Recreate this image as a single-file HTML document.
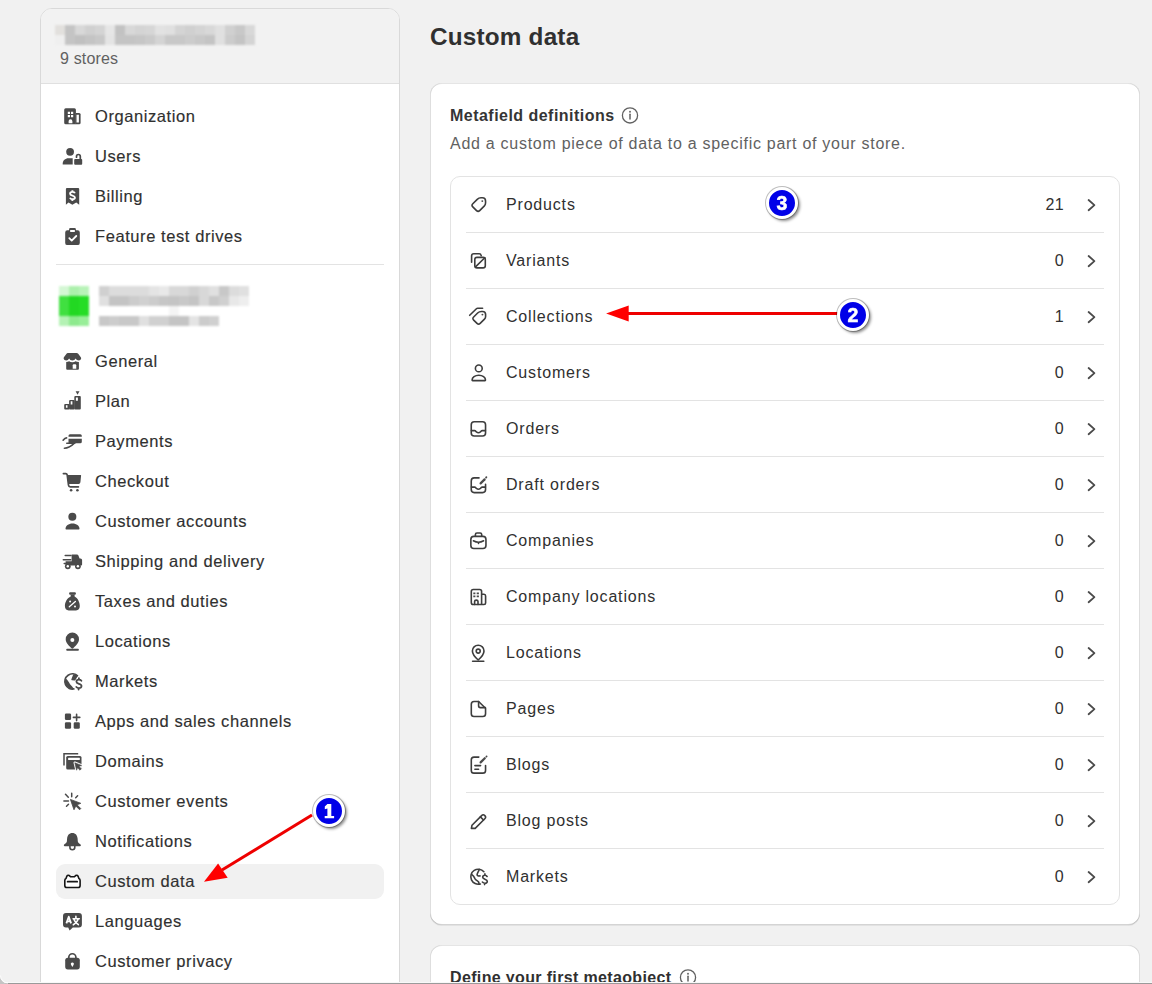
<!DOCTYPE html>
<html><head><meta charset="utf-8">
<style>
*{box-sizing:border-box;margin:0;padding:0}
html,body{width:1152px;height:984px;overflow:hidden;background:#f1f1f1;font-family:"Liberation Sans",sans-serif;color:#303030}
.abs{position:absolute;overflow:visible}
#side{position:absolute;left:40px;top:8px;width:360px;height:1000px;background:#fff;border:1px solid #d9d9d9;border-radius:12px;overflow:hidden}
#shead{position:absolute;left:0;top:0;width:358px;height:75px;background:#f2f2f2;border-bottom:1px solid #e0e0e0}
.txt{position:absolute;white-space:nowrap}
.nav{font-size:16.5px;letter-spacing:0.58px;color:#303030;-webkit-text-stroke:0.15px #303030}
.rowt{font-size:16px;letter-spacing:0.82px;color:#303030}
#card{position:absolute;left:430px;top:83px;width:710px;height:842px;background:#fff;border-radius:12px;
 box-shadow:0 1px 0 0 rgba(26,26,26,.07), inset 0 1px 0 0 rgba(204,204,204,.5), inset 0 -1px 0 0 rgba(0,0,0,.17), inset 1px 0 0 0 rgba(0,0,0,.13), inset -1px 0 0 0 rgba(0,0,0,.13)}
#card2{position:absolute;left:430px;top:945px;width:710px;height:100px;background:#fff;border-radius:12px;
 box-shadow:inset 0 1px 0 0 rgba(204,204,204,.5), inset 1px 0 0 0 rgba(0,0,0,.13), inset -1px 0 0 0 rgba(0,0,0,.13)}
#list{position:absolute;left:450px;top:176px;width:670px;height:729px;border:1px solid #e3e3e3;border-radius:10px;background:#fff}
.hr{position:absolute;height:1px;background:#e3e3e3}
.badge{position:absolute;width:32px;height:32px;border-radius:50%;background:#0000e8;border:3.5px solid #fff;
 box-shadow:0 0 0 1px rgba(0,0,0,.25), 2px 2px 3px rgba(0,0,0,.45);color:#fff;font:bold 19.5px "Liberation Sans",sans-serif;text-align:center;line-height:27px;-webkit-text-stroke:0.5px #fff}
</style></head><body>

<div id="side"><div id="shead"></div></div>
<div class="abs" style="left:0;top:0;width:1px;height:1px;filter:blur(0.8px)">
<div class="abs" style="left:55px;top:25px;width:10px;height:10px;background:#e2e0dd"></div>
<div class="abs" style="left:55px;top:35px;width:10px;height:10px;background:#efefef"></div>
<div class="abs" style="left:65px;top:25px;width:10px;height:10px;background:#c4c4c4"></div>
<div class="abs" style="left:65px;top:35px;width:10px;height:10px;background:#c4c4c4"></div>
<div class="abs" style="left:75px;top:25px;width:10px;height:10px;background:#d8d8d8"></div>
<div class="abs" style="left:75px;top:35px;width:10px;height:10px;background:#c0c0c0"></div>
<div class="abs" style="left:85px;top:25px;width:10px;height:10px;background:#d0d0d0"></div>
<div class="abs" style="left:85px;top:35px;width:10px;height:10px;background:#c4c4c4"></div>
<div class="abs" style="left:95px;top:25px;width:10px;height:10px;background:#d4d4d4"></div>
<div class="abs" style="left:95px;top:35px;width:10px;height:10px;background:#c8c8c8"></div>
<div class="abs" style="left:105px;top:25px;width:10px;height:10px;background:#e6e6e6"></div>
<div class="abs" style="left:105px;top:35px;width:10px;height:10px;background:#e4e4e4"></div>
<div class="abs" style="left:115px;top:25px;width:10px;height:10px;background:#c2c2c2"></div>
<div class="abs" style="left:115px;top:35px;width:10px;height:10px;background:#c4c4c4"></div>
<div class="abs" style="left:125px;top:25px;width:10px;height:10px;background:#d8d8d8"></div>
<div class="abs" style="left:125px;top:35px;width:10px;height:10px;background:#c4c4c4"></div>
<div class="abs" style="left:135px;top:25px;width:10px;height:10px;background:#d4d4d4"></div>
<div class="abs" style="left:135px;top:35px;width:10px;height:10px;background:#c6c6c6"></div>
<div class="abs" style="left:145px;top:25px;width:10px;height:10px;background:#d6d6d6"></div>
<div class="abs" style="left:145px;top:35px;width:10px;height:10px;background:#cacaca"></div>
<div class="abs" style="left:155px;top:25px;width:10px;height:10px;background:#e2e2e2"></div>
<div class="abs" style="left:155px;top:35px;width:10px;height:10px;background:#d4d4d4"></div>
<div class="abs" style="left:165px;top:25px;width:10px;height:10px;background:#e0e0e0"></div>
<div class="abs" style="left:165px;top:35px;width:10px;height:10px;background:#c8c8c8"></div>
<div class="abs" style="left:175px;top:25px;width:10px;height:10px;background:#d4d4d4"></div>
<div class="abs" style="left:175px;top:35px;width:10px;height:10px;background:#c8c8c8"></div>
<div class="abs" style="left:185px;top:25px;width:10px;height:10px;background:#d0d0d0"></div>
<div class="abs" style="left:185px;top:35px;width:10px;height:10px;background:#cccccc"></div>
<div class="abs" style="left:195px;top:25px;width:10px;height:10px;background:#d4d4d4"></div>
<div class="abs" style="left:195px;top:35px;width:10px;height:10px;background:#c8c8c8"></div>
<div class="abs" style="left:205px;top:25px;width:10px;height:10px;background:#d8d8d8"></div>
<div class="abs" style="left:205px;top:35px;width:10px;height:10px;background:#c4c4c4"></div>
<div class="abs" style="left:215px;top:25px;width:10px;height:10px;background:#e0e0e0"></div>
<div class="abs" style="left:215px;top:35px;width:10px;height:10px;background:#e0e0e0"></div>
<div class="abs" style="left:225px;top:25px;width:10px;height:10px;background:#d0d0d0"></div>
<div class="abs" style="left:225px;top:35px;width:10px;height:10px;background:#cccccc"></div>
<div class="abs" style="left:235px;top:25px;width:10px;height:10px;background:#c8c8c8"></div>
<div class="abs" style="left:235px;top:35px;width:10px;height:10px;background:#c4c4c4"></div>
<div class="abs" style="left:245px;top:25px;width:10px;height:10px;background:#d8d8d8"></div>
<div class="abs" style="left:245px;top:35px;width:10px;height:10px;background:#d4d4d4"></div>
</div>
<div class="txt" style="left:60px;top:50px;font-size:16px;letter-spacing:0.15px;color:#616161;line-height:18px">9 stores</div>
<div class="abs" style="left:56px;top:864px;width:328px;height:35px;border-radius:9px;background:#f1f1f1"></div>
<svg class="abs" style="left:62px;top:106px" width="20" height="20" viewBox="0 0 20 20" ><path fill="#4a4a4a" d="M3.7 2.2h8.7a1.5 1.5 0 0 1 1.5 1.5V18.3H3.7a1.5 1.5 0 0 1-1.5-1.5V3.7a1.5 1.5 0 0 1 1.5-1.5Z"/>
<path fill="#4a4a4a" d="M13.8 6.9h3.3a1.5 1.5 0 0 1 1.5 1.5v8.4a1.5 1.5 0 0 1-1.5 1.5h-3.3Z"/>
<path fill="#fff" d="M5.8 5.8h2.2v2.2h-2.2ZM9 5.8h2.2v2.2H9ZM5.8 9h2.2v2.2h-2.2ZM9 9h2.2v2.2H9ZM6.6 17.3V15.2A1.9 1.9 0 0 1 10.4 15.2V17.3ZM14.5 8.7h2.4v7.7h-2.4Z"/></svg>
<div class="txt nav" style="left:95px;top:106px;line-height:20px">Organization</div>
<svg class="abs" style="left:62px;top:146px" width="20" height="20" viewBox="0 0 20 20" ><circle cx="8.1" cy="5.8" r="3.9" fill="#4a4a4a"/>
<path fill="#4a4a4a" d="M0.7 18.6V17.6C0.7 14.6 3.2 12.3 6.4 12.3H10.7V18.6Z"/>
<rect x="12.2" y="13.1" width="8" height="5.6" rx="0.9" fill="#4a4a4a"/>
<path fill="none" stroke="#4a4a4a" stroke-width="1.7" stroke-linecap="round" d="M14.5 11.2V10.4A1.9 1.9 0 0 1 18.3 10.4V13.5"/></svg>
<div class="txt nav" style="left:95px;top:146px;line-height:20px">Users</div>
<svg class="abs" style="left:62px;top:186px" width="20" height="20" viewBox="0 0 20 20" ><path fill="#4a4a4a" d="M5 1.9H16.1A1.1 1.1 0 0 1 17.2 3V18.8L14.25 16.4L10.35 18.8L6.5 16.4L3.9 18.8V3A1.1 1.1 0 0 1 5 1.9Z"/>
<path fill="none" stroke="#fff" stroke-width="1.9" d="M12.9 7.3C12.6 6.4 11.6 5.9 10.4 5.9C9.1 5.9 8.1 6.7 8.1 7.7C8.1 10.1 12.9 9 12.9 11.5C12.9 12.5 11.9 13.3 10.4 13.3C9.2 13.3 8.3 12.7 8 11.8M10.4 4.3V5.9M10.4 13.3V15"/></svg>
<div class="txt nav" style="left:95px;top:186px;line-height:20px">Billing</div>
<svg class="abs" style="left:62px;top:226px" width="20" height="20" viewBox="0 0 20 20" ><path fill="#4a4a4a" d="M7.1 3.2A1.3 1.3 0 0 1 8.4 1.9H12.6A1.3 1.3 0 0 1 13.9 3.2V4.2H15.6A2.2 2.2 0 0 1 17.8 6.4V16.9A2.2 2.2 0 0 1 15.6 19.1H5.4A2.2 2.2 0 0 1 3.2 16.9V6.4A2.2 2.2 0 0 1 5.4 4.2H7.1Z"/>
<rect x="8" y="3.9" width="5" height="2.2" rx="0.8" fill="#fff"/>
<path fill="none" stroke="#fff" stroke-width="1.8" stroke-linecap="round" stroke-linejoin="round" d="M7.3 12.2L9.7 14.6L14.3 10"/></svg>
<div class="txt nav" style="left:95px;top:226px;line-height:20px">Feature test drives</div>
<svg class="abs" style="left:62px;top:351px" width="20" height="20" viewBox="0 0 20 20" ><path fill="#4a4a4a" d="M5.8 1.9H14.6Q15.6 1.9 16.2 2.8L18.8 6.2Q19.3 7 19.1 7.8Q18.6 9.4 16.9 9.4Q14.5 9.4 13.6 7.5Q12.7 9.4 10.35 9.4Q8 9.4 7.1 7.5Q6.2 9.4 4.2 9.4Q2.1 9.4 1.7 7.8Q1.5 7 1.9 6.2L4.5 2.8Q5 1.9 5.8 1.9Z"/>
<path fill="#4a4a4a" d="M4.2 11Q6 11 7.1 10.2Q8.5 11.2 10.35 11.2Q12.2 11.2 13.6 10.2Q14.7 11 16.9 11V17.8Q16.9 18.8 15.9 18.8H5.2Q4.2 18.8 4.2 17.8Z"/>
<path fill="#fff" d="M10.7 14.3Q10.7 13.25 11.75 13.25H13.2Q14.25 13.25 14.25 14.3V17.8H10.7Z"/></svg>
<div class="txt nav" style="left:95px;top:351px;line-height:20px">General</div>
<svg class="abs" style="left:62px;top:391px" width="20" height="20" viewBox="0 0 20 20" ><path fill="#4a4a4a" d="M13.6 0.2H17.5L15.55 3.8Z"/>
<rect x="2.2" y="12.9" width="5.4" height="5.5" rx="1" fill="#4a4a4a"/>
<rect x="7.1" y="9" width="5.6" height="9.4" rx="1" fill="#4a4a4a"/>
<rect x="12.3" y="5.1" width="6.5" height="13.3" rx="1" fill="#4a4a4a"/>
<path fill="#fff" d="M3.9 14.2h1.6v2.6H3.9ZM8.7 10.3h1.7v3.3H8.7ZM13.9 6.4h2v3.3h-2Z"/></svg>
<div class="txt nav" style="left:95px;top:391px;line-height:20px">Plan</div>
<svg class="abs" style="left:62px;top:431px" width="20" height="20" viewBox="0 0 20 20" ><path fill="#4a4a4a" d="M8 3.2H18.3A1.5 1.5 0 0 1 19.8 4.7V5.8H6.5V4.7A1.5 1.5 0 0 1 8 3.2Z"/>
<path fill="#4a4a4a" d="M6.5 7.7H19.8V10.8A1.5 1.5 0 0 1 18.3 12.3H11.5L6.5 12.3Z"/>
<path fill="none" stroke="#4a4a4a" stroke-width="1.6" stroke-linecap="round" d="M1.1 9.2C2.2 7.8 3.4 6.9 4.6 6.9M4.8 12.3H12.8M2.4 17.2C6 17.2 8.8 15.5 11.8 12.6"/></svg>
<div class="txt nav" style="left:95px;top:431px;line-height:20px">Payments</div>
<svg class="abs" style="left:62px;top:471px" width="20" height="20" viewBox="0 0 20 20" ><path fill="none" stroke="#4a4a4a" stroke-width="1.7" stroke-linecap="round" stroke-linejoin="round" d="M1.4 2.6H3.8Q4.9 2.6 5.2 3.9L6.5 14.2Q6.7 15.8 8.3 15.8H16.4"/>
<path fill="#4a4a4a" d="M5.1 3.9H18.6Q19.2 3.9 19.1 4.6L18.4 11.3Q18.2 12.9 16.6 12.9H6.3Z"/>
<circle cx="9.1" cy="19.2" r="1.3" fill="#4a4a4a"/><circle cx="15.4" cy="19.2" r="1.3" fill="#4a4a4a"/></svg>
<div class="txt nav" style="left:95px;top:471px;line-height:20px">Checkout</div>
<svg class="abs" style="left:62px;top:511px" width="20" height="20" viewBox="0 0 20 20" ><circle cx="10.35" cy="5.8" r="4" fill="#4a4a4a"/>
<path fill="#4a4a4a" d="M3.5 17.8C3.5 14.8 6.5 12.5 10.5 12.5C14.5 12.5 17.5 14.8 17.5 17.8Q17.5 18.5 16.8 18.5H4.2Q3.5 18.5 3.5 17.8Z"/></svg>
<div class="txt nav" style="left:95px;top:511px;line-height:20px">Customer accounts</div>
<svg class="abs" style="left:62px;top:551px" width="20" height="20" viewBox="0 0 20 20" ><path fill="none" stroke="#4a4a4a" stroke-width="1.5" stroke-linecap="round" d="M3.2 4.5H9M1.3 8.7H8.7M2.2 12.6H8.4"/>
<path fill="#4a4a4a" d="M9.8 3.5H15Q15.9 3.5 16.3 4.3L17.6 7.4H18.5Q20.1 7.4 20.1 9V13.5Q20.1 14.4 19.2 14.4H4.5Q3.6 14.4 3.6 13.5V10.2H9.6V3.7Z"/>
<circle cx="5.8" cy="15.3" r="2.9" fill="#4a4a4a"/><circle cx="15.9" cy="15.3" r="2.9" fill="#4a4a4a"/>
<circle cx="5.8" cy="15.3" r="1.2" fill="#fff"/><circle cx="15.9" cy="15.3" r="1.2" fill="#fff"/></svg>
<div class="txt nav" style="left:95px;top:551px;line-height:20px">Shipping and delivery</div>
<svg class="abs" style="left:62px;top:591px" width="20" height="20" viewBox="0 0 20 20" ><rect x="7.1" y="1.2" width="6.8" height="2.5" rx="1" fill="#4a4a4a"/>
<path fill="#4a4a4a" d="M8.7 3.5H12.6V5.5C15.6 7 17.8 11 17.8 15C17.8 17.6 16.4 19.4 14 19.4H6.7C4.3 19.4 2.9 17.6 2.9 15C2.9 11 5.3 7 8.7 5.5Z"/>
<path fill="none" stroke="#fff" stroke-width="1.3" stroke-linecap="round" d="M7.3 15.8L13.4 10.4"/>
<circle cx="8.1" cy="10.6" r="1" fill="#fff"/><circle cx="13" cy="15.5" r="1" fill="#fff"/></svg>
<div class="txt nav" style="left:95px;top:591px;line-height:20px">Taxes and duties</div>
<svg class="abs" style="left:62px;top:631px" width="20" height="20" viewBox="0 0 20 20" ><path fill="#4a4a4a" fill-rule="evenodd" d="M10.35 1.5A6.65 6.65 0 0 1 17 8.2C17 12 13.3 15.4 10.35 17.8C7.4 15.4 3.7 12 3.7 8.2A6.65 6.65 0 0 1 10.35 1.5ZM10.35 7A2 2 0 1 0 10.35 11A2 2 0 1 0 10.35 7Z"/>
<rect x="4.2" y="17.8" width="12.7" height="1.9" rx="0.9" fill="#4a4a4a"/></svg>
<div class="txt nav" style="left:95px;top:631px;line-height:20px">Locations</div>
<svg class="abs" style="left:62px;top:671px" width="20" height="20" viewBox="0 0 20 20" ><path fill="none" stroke="#4a4a4a" stroke-width="1.7" d="M15.84 5.1A7.6 7.6 0 1 0 12.44 17.8"/>
<path fill="#4a4a4a" d="M3.58 7.26A7.6 7.6 0 0 0 12.44 17.8L12.6 18.5L10.7 16.3C9.8 14.8 8.6 14.2 7.9 13C7.2 11.8 6 9.2 3.58 7.26Z"/>
<path fill="#4a4a4a" d="M11.2 3.4L16.2 4.2L13.3 9.2Q13 9.5 12.5 9.5L10 9.3Q9 9.1 9.4 8.2Z"/>
<path fill="none" stroke="#4a4a4a" stroke-width="1.8" stroke-linecap="round" d="M19.4 9.7C18.8 8.9 18 8.6 17 8.6C15.5 8.6 14.4 9.6 14.4 10.8C14.4 13.4 19.5 12.3 19.5 15C19.5 16.3 18.3 17.1 16.8 17.1C15.8 17.1 14.9 16.7 14.3 16M16.9 7.2V8.6M16.6 17.1V18.6"/></svg>
<div class="txt nav" style="left:95px;top:671px;line-height:20px">Markets</div>
<svg class="abs" style="left:62px;top:711px" width="20" height="20" viewBox="0 0 20 20" ><rect x="2.9" y="2.5" width="6.2" height="6.5" rx="1.3" fill="#4a4a4a"/>
<rect x="2.9" y="11.3" width="6.2" height="6.5" rx="1.3" fill="#4a4a4a"/>
<rect x="11.7" y="11.3" width="6.1" height="6.5" rx="1.3" fill="#4a4a4a"/>
<path fill="none" stroke="#4a4a4a" stroke-width="1.6" stroke-linecap="round" d="M14.6 3.2V9.6M11.4 6.4H17.8"/></svg>
<div class="txt nav" style="left:95px;top:711px;line-height:20px">Apps and sales channels</div>
<svg class="abs" style="left:62px;top:751px" width="20" height="20" viewBox="0 0 20 20" ><path fill="none" stroke="#4a4a4a" stroke-width="1.5" d="M2 14.6V2.7H16.2"/>
<path fill="#4a4a4a" d="M5.7 5.1H18A1.5 1.5 0 0 1 19.5 6.6V17A1.5 1.5 0 0 1 18 18.5H5.7A1.5 1.5 0 0 1 4.2 17V6.6A1.5 1.5 0 0 1 5.7 5.1Z"/>
<rect x="6.1" y="6.8" width="11.7" height="2.2" rx="0.5" fill="#fff"/>
<path fill="#fff" stroke="#fff" stroke-width="2.6" stroke-linejoin="round" d="M12.8 11.8L19.6 14.4L17 15.4L19.4 17.8L18 19.2L15.6 16.8L14.6 19.2Z"/><path fill="#4a4a4a" stroke="#4a4a4a" stroke-width="0.6" stroke-linejoin="round" d="M12.8 11.8L19.6 14.4L17 15.4L19.4 17.8L18 19.2L15.6 16.8L14.6 19.2Z"/></svg>
<div class="txt nav" style="left:95px;top:751px;line-height:20px">Domains</div>
<svg class="abs" style="left:62px;top:791px" width="20" height="20" viewBox="0 0 20 20" ><path fill="#4a4a4a" stroke="#4a4a4a" stroke-width="0.8" stroke-linejoin="round" d="M8.4 8.4L18.8 12.3L15 13.8L18.8 17.6L17.6 18.8L13.8 15L12 18.8Z"/>
<path fill="none" stroke="#4a4a4a" stroke-width="1.5" stroke-linecap="round" d="M9.7 2.2V5.8M3.5 3.2L6.3 6.2M15.6 4.8L13.7 6.7M1.9 10H6.5M4.5 15.2L6.5 13.2"/></svg>
<div class="txt nav" style="left:95px;top:791px;line-height:20px">Customer events</div>
<svg class="abs" style="left:62px;top:831px" width="20" height="20" viewBox="0 0 20 20" ><path fill="#4a4a4a" d="M10.35 1.9C13.6 1.9 15.4 4.3 15.6 7.5L15.8 10.2C16 11.6 16.8 12.2 18 12.9C18.7 13.3 18.9 13.8 18.9 14.3C18.9 14.9 18.5 15.2 17.9 15.2H2.8C2.2 15.2 1.8 14.9 1.8 14.3C1.8 13.8 2 13.3 2.7 12.9C3.9 12.2 4.7 11.6 4.9 10.2L5.1 7.5C5.3 4.3 7.1 1.9 10.35 1.9Z"/>
<path fill="none" stroke="#4a4a4a" stroke-width="1.6" d="M7.9 15V16.3A2.45 2.45 0 0 0 12.8 16.3V15"/></svg>
<div class="txt nav" style="left:95px;top:831px;line-height:20px">Notifications</div>
<svg class="abs" style="left:62px;top:871px" width="20" height="20" viewBox="0 0 20 20" ><path fill="#fff" stroke="#151515" stroke-width="1.6" stroke-linejoin="round" d="M2.8 9.4Q2.8 8.1 4 7.6L4.9 5.1Q5.3 4.25 6.3 4.25Q7.3 4.25 7.8 5.1L8.5 5.7H12.5L13.1 5.1Q13.6 4.25 14.6 4.25Q15.6 4.25 16 5.1L16.9 7.6Q18.1 8.1 18.1 9.4V14.4Q18.1 16.5 16 16.5H4.9Q2.8 16.5 2.8 14.4Z"/>
<path fill="none" stroke="#151515" stroke-width="1.7" stroke-linecap="round" d="M5.6 10.7H15.2"/></svg>
<div class="txt nav" style="left:95px;top:871px;line-height:20px">Custom data</div>
<svg class="abs" style="left:62px;top:911px" width="20" height="20" viewBox="0 0 20 20" ><path fill="#4a4a4a" d="M4 1.9H16.9A3 3 0 0 1 19.9 4.9V13.6A3 3 0 0 1 16.9 16.6H10.8L7.6 19.6L6.2 16.6H4A3 3 0 0 1 1 13.6V4.9A3 3 0 0 1 4 1.9Z"/>
<path fill="none" stroke="#fff" stroke-width="1.8" stroke-linejoin="round" d="M4.4 12.4L6.75 5.7L9.1 12.4M5.3 10.3H8.2"/>
<path fill="none" stroke="#fff" stroke-width="1.6" stroke-linecap="round" d="M13.9 5.3V7.2M11.1 7.7H17.3M12 8.6C12.8 11 14 12.6 16.3 13.6M16 8.6C15.2 11 14 12.6 11.3 13.8"/></svg>
<div class="txt nav" style="left:95px;top:911px;line-height:20px">Languages</div>
<svg class="abs" style="left:62px;top:951px" width="20" height="20" viewBox="0 0 20 20" ><path fill="none" stroke="#4a4a4a" stroke-width="1.7" d="M6.8 7.2V6.3A3.55 3.55 0 0 1 13.9 6.3V7.2"/>
<rect x="3.2" y="6.7" width="14.6" height="11.7" rx="2.6" fill="#4a4a4a"/>
<path fill="#fff" d="M10.35 11.4A1.5 1.5 0 0 1 11.5 13.9L10.35 15.9L9.2 13.9A1.5 1.5 0 0 1 10.35 11.4Z"/></svg>
<div class="txt nav" style="left:95px;top:951px;line-height:20px">Customer privacy</div>
<div class="hr" style="left:56px;top:264px;width:328px"></div>
<div class="abs" style="left:0;top:0;width:1px;height:1px;filter:blur(0.8px)">
<div class="abs" style="left:59px;top:286px;width:10px;height:10px;background:#d4f7d4"></div>
<div class="abs" style="left:59px;top:296px;width:10px;height:20px;background:#40e040"></div>
<div class="abs" style="left:59px;top:316px;width:10px;height:10px;background:#b4f2b4"></div>
<div class="abs" style="left:69px;top:286px;width:10px;height:10px;background:#acf0ac"></div>
<div class="abs" style="left:69px;top:296px;width:10px;height:20px;background:#22d822"></div>
<div class="abs" style="left:69px;top:316px;width:10px;height:10px;background:#8eea8e"></div>
<div class="abs" style="left:79px;top:286px;width:10px;height:10px;background:#b8f3b8"></div>
<div class="abs" style="left:79px;top:296px;width:10px;height:20px;background:#26dd26"></div>
<div class="abs" style="left:79px;top:316px;width:10px;height:10px;background:#98ee98"></div>
<div class="abs" style="left:99px;top:286px;width:10px;height:10px;background:#d0d0d0"></div>
<div class="abs" style="left:109px;top:286px;width:10px;height:10px;background:#dcdcdc"></div>
<div class="abs" style="left:119px;top:286px;width:10px;height:10px;background:#dcdcdc"></div>
<div class="abs" style="left:129px;top:286px;width:10px;height:10px;background:#dcdcdc"></div>
<div class="abs" style="left:139px;top:286px;width:10px;height:10px;background:#dcdcdc"></div>
<div class="abs" style="left:149px;top:286px;width:10px;height:10px;background:#e4e4e4"></div>
<div class="abs" style="left:159px;top:286px;width:10px;height:10px;background:#e8e8e8"></div>
<div class="abs" style="left:169px;top:286px;width:10px;height:10px;background:#d8d8d8"></div>
<div class="abs" style="left:179px;top:286px;width:10px;height:10px;background:#d8d8d8"></div>
<div class="abs" style="left:189px;top:286px;width:10px;height:10px;background:#d0d0d0"></div>
<div class="abs" style="left:199px;top:286px;width:10px;height:10px;background:#d8d8d8"></div>
<div class="abs" style="left:209px;top:286px;width:10px;height:10px;background:#e0e0e0"></div>
<div class="abs" style="left:219px;top:286px;width:10px;height:10px;background:#c8c8c8"></div>
<div class="abs" style="left:229px;top:286px;width:10px;height:10px;background:#dcdcdc"></div>
<div class="abs" style="left:239px;top:286px;width:10px;height:10px;background:#e0e0e0"></div>
<div class="abs" style="left:99px;top:296px;width:10px;height:10px;background:#e0e0e0"></div>
<div class="abs" style="left:109px;top:296px;width:10px;height:10px;background:#c4c4c4"></div>
<div class="abs" style="left:119px;top:296px;width:10px;height:10px;background:#c4c4c4"></div>
<div class="abs" style="left:129px;top:296px;width:10px;height:10px;background:#cccccc"></div>
<div class="abs" style="left:139px;top:296px;width:10px;height:10px;background:#d0d0d0"></div>
<div class="abs" style="left:149px;top:296px;width:10px;height:10px;background:#cccccc"></div>
<div class="abs" style="left:159px;top:296px;width:10px;height:10px;background:#c6c6c6"></div>
<div class="abs" style="left:169px;top:296px;width:10px;height:10px;background:#c4c4c4"></div>
<div class="abs" style="left:179px;top:296px;width:10px;height:10px;background:#c8c8c8"></div>
<div class="abs" style="left:189px;top:296px;width:10px;height:10px;background:#c4c4c4"></div>
<div class="abs" style="left:199px;top:296px;width:10px;height:10px;background:#d8d8d8"></div>
<div class="abs" style="left:209px;top:296px;width:10px;height:10px;background:#c8c8c8"></div>
<div class="abs" style="left:219px;top:296px;width:10px;height:10px;background:#d0d0d0"></div>
<div class="abs" style="left:229px;top:296px;width:10px;height:10px;background:#e8e8e8"></div>
<div class="abs" style="left:239px;top:296px;width:10px;height:10px;background:#eeeeee"></div>
<div class="abs" style="left:169px;top:306px;width:10px;height:10px;background:#f4f4f4"></div>
<div class="abs" style="left:99px;top:316px;width:10px;height:10px;background:#c8c8c8"></div>
<div class="abs" style="left:109px;top:316px;width:10px;height:10px;background:#cccccc"></div>
<div class="abs" style="left:119px;top:316px;width:10px;height:10px;background:#c8c8c8"></div>
<div class="abs" style="left:129px;top:316px;width:10px;height:10px;background:#c8c8c8"></div>
<div class="abs" style="left:139px;top:316px;width:10px;height:10px;background:#e0e0e0"></div>
<div class="abs" style="left:149px;top:316px;width:10px;height:10px;background:#d0d0d0"></div>
<div class="abs" style="left:159px;top:316px;width:10px;height:10px;background:#d0d0d0"></div>
<div class="abs" style="left:169px;top:316px;width:10px;height:10px;background:#c4c4c4"></div>
<div class="abs" style="left:179px;top:316px;width:10px;height:10px;background:#c4c4c4"></div>
<div class="abs" style="left:189px;top:316px;width:10px;height:10px;background:#e4e4e4"></div>
<div class="abs" style="left:199px;top:316px;width:10px;height:10px;background:#cccccc"></div>
<div class="abs" style="left:209px;top:316px;width:10px;height:10px;background:#d0d0d0"></div>
</div>
<div class="txt" style="left:430px;top:23px;font-size:24.3px;font-weight:bold;letter-spacing:0.2px;color:#303030;line-height:28px">Custom data</div>
<div id="card"></div>
<div class="txt" style="left:450px;top:105.5px;font-size:16px;font-weight:bold;letter-spacing:0.47px;color:#353535;line-height:20px">Metafield definitions</div>
<svg class="abs" style="left:620px;top:105px" width="20" height="20" viewBox="0 0 20 20" ><circle cx="10" cy="10.4" r="7.6" fill="none" stroke="#616161" stroke-width="1.3"/><path d="M10 9.3V14" stroke="#616161" stroke-width="1.5" stroke-linecap="round"/><circle cx="10" cy="6.8" r="0.95" fill="#616161"/></svg>
<div class="txt" style="left:450px;top:133.5px;font-size:16px;letter-spacing:0.72px;color:#616161;line-height:20px">Add a custom piece of data to a specific part of your store.</div>
<div id="list"></div>
<svg class="abs" style="left:468px;top:194.5px" width="20" height="20" viewBox="0 0 20 20" ><path fill="none" stroke="#3d3d3d" stroke-width="1.6" stroke-linecap="round" stroke-linejoin="round" d="M13.00 2.75L14.35 2.75 Q17.55 2.75 17.55 5.95L17.55 8.10 Q17.55 9.70 16.42 10.83L11.66 15.59 Q10.10 17.15 8.54 15.59L4.81 11.86 Q3.25 10.30 4.81 8.74L9.24 4.31 Q10.80 2.75 13.00 2.75Z"/><circle cx="14.3" cy="6.1" r="0.95" fill="#4a4a4a"/></svg>
<div class="txt rowt" style="left:506px;top:194.5px;line-height:20px">Products</div>
<div class="txt rowt" style="right:88px;top:194.5px;line-height:20px;letter-spacing:0.3px">21</div>
<svg class="abs" style="left:1082px;top:194.5px" width="20" height="20" viewBox="0 0 20 20" ><path d="M6.6 5L12.4 10.1L6.6 15.2" fill="none" stroke="#4a4a4a" stroke-width="1.8" stroke-linecap="round" stroke-linejoin="round"/></svg>
<div class="hr" style="left:466px;top:232px;width:638px"></div>
<svg class="abs" style="left:468px;top:250.5px" width="20" height="20" viewBox="0 0 20 20" ><path fill="none" stroke="#3d3d3d" stroke-width="1.6" stroke-linecap="round" stroke-linejoin="round" d="M3.6 11.3V5Q3.6 2.8 5.8 2.8H11.2Q12.8 2.8 13.2 4.6"/><rect x="6.8" y="6.4" width="10.5" height="10.5" rx="2.2" fill="none" stroke="#3d3d3d" stroke-width="1.6" stroke-linecap="round" stroke-linejoin="round"/><path fill="none" stroke="#3d3d3d" stroke-width="1.6" stroke-linecap="round" stroke-linejoin="round" d="M7.5 15.9L16.8 6.8"/></svg>
<div class="txt rowt" style="left:506px;top:250.5px;line-height:20px">Variants</div>
<div class="txt rowt" style="right:88px;top:250.5px;line-height:20px;letter-spacing:0.3px">0</div>
<svg class="abs" style="left:1082px;top:250.5px" width="20" height="20" viewBox="0 0 20 20" ><path d="M6.6 5L12.4 10.1L6.6 15.2" fill="none" stroke="#4a4a4a" stroke-width="1.8" stroke-linecap="round" stroke-linejoin="round"/></svg>
<div class="hr" style="left:466px;top:288px;width:638px"></div>
<svg class="abs" style="left:468px;top:306.5px" width="20" height="20" viewBox="0 0 20 20" ><path fill="none" stroke="#3d3d3d" stroke-width="1.6" stroke-linecap="round" stroke-linejoin="round" d="M13.40 4.45L14.60 4.45 Q17.60 4.45 17.60 7.45L17.60 9.40 Q17.60 11.00 16.47 12.13L12.16 16.44 Q10.60 18.00 9.04 16.44L5.66 13.06 Q4.10 11.50 5.66 9.95L9.64 6.00 Q11.20 4.45 13.40 4.45Z"/><circle cx="14.4" cy="7.6" r="0.95" fill="#4a4a4a"/><path fill="none" stroke="#3d3d3d" stroke-width="1.6" stroke-linecap="round" stroke-linejoin="round" d="M1.7 8.3L8.4 1.7Q8.9 1.2 9.6 1.2H14.6"/></svg>
<div class="txt rowt" style="left:506px;top:306.5px;line-height:20px">Collections</div>
<div class="txt rowt" style="right:88px;top:306.5px;line-height:20px;letter-spacing:0.3px">1</div>
<svg class="abs" style="left:1082px;top:306.5px" width="20" height="20" viewBox="0 0 20 20" ><path d="M6.6 5L12.4 10.1L6.6 15.2" fill="none" stroke="#4a4a4a" stroke-width="1.8" stroke-linecap="round" stroke-linejoin="round"/></svg>
<div class="hr" style="left:466px;top:344px;width:638px"></div>
<svg class="abs" style="left:468px;top:362.5px" width="20" height="20" viewBox="0 0 20 20" ><circle cx="10.8" cy="5.4" r="3.4" fill="none" stroke="#3d3d3d" stroke-width="1.6" stroke-linecap="round" stroke-linejoin="round"/><path fill="none" stroke="#3d3d3d" stroke-width="1.6" stroke-linecap="round" stroke-linejoin="round" d="M4.1 17.1C4.1 14.3 7 12.2 10.8 12.2C14.6 12.2 17.5 14.3 17.5 17.1Q17.5 17.6 17 17.6H4.6Q4.1 17.6 4.1 17.1Z"/></svg>
<div class="txt rowt" style="left:506px;top:362.5px;line-height:20px">Customers</div>
<div class="txt rowt" style="right:88px;top:362.5px;line-height:20px;letter-spacing:0.3px">0</div>
<svg class="abs" style="left:1082px;top:362.5px" width="20" height="20" viewBox="0 0 20 20" ><path d="M6.6 5L12.4 10.1L6.6 15.2" fill="none" stroke="#4a4a4a" stroke-width="1.8" stroke-linecap="round" stroke-linejoin="round"/></svg>
<div class="hr" style="left:466px;top:400px;width:638px"></div>
<svg class="abs" style="left:468px;top:418.5px" width="20" height="20" viewBox="0 0 20 20" ><rect x="3.25" y="2.75" width="14.3" height="14.3" rx="3" fill="none" stroke="#3d3d3d" stroke-width="1.6" stroke-linecap="round" stroke-linejoin="round"/><path fill="none" stroke="#3d3d3d" stroke-width="1.6" stroke-linecap="round" stroke-linejoin="round" d="M3.4 11.6H6.6Q7.2 11.6 7.6 12.1L8.4 12.9Q10.4 14.5 12.4 12.9L13.2 12.1Q13.6 11.6 14.2 11.6H17.4"/></svg>
<div class="txt rowt" style="left:506px;top:418.5px;line-height:20px">Orders</div>
<div class="txt rowt" style="right:88px;top:418.5px;line-height:20px;letter-spacing:0.3px">0</div>
<svg class="abs" style="left:1082px;top:418.5px" width="20" height="20" viewBox="0 0 20 20" ><path d="M6.6 5L12.4 10.1L6.6 15.2" fill="none" stroke="#4a4a4a" stroke-width="1.8" stroke-linecap="round" stroke-linejoin="round"/></svg>
<div class="hr" style="left:466px;top:456px;width:638px"></div>
<svg class="abs" style="left:468px;top:474.5px" width="20" height="20" viewBox="0 0 20 20" ><path fill="none" stroke="#3d3d3d" stroke-width="1.6" stroke-linecap="round" stroke-linejoin="round" d="M11 2.9H6.2Q3.25 2.9 3.25 5.9V14.6Q3.25 17.6 6.2 17.6H14.6Q17.55 17.6 17.55 14.6V9.2"/><path fill="none" stroke="#3d3d3d" stroke-width="1.6" stroke-linecap="round" stroke-linejoin="round" d="M3.4 12.1H6.6Q7.2 12.1 7.6 12.6L8.4 13.4Q10.4 15 12.4 13.4L13.2 12.6Q13.6 12.1 14.2 12.1H17.4"/><path fill="none" stroke="#4a4a4a" stroke-width="2.2" stroke-linecap="round" d="M12.6 8.4L16.6 4.4"/><path fill="none" stroke="#4a4a4a" stroke-width="1.8" stroke-linecap="round" d="M18.1 2.5L18.4 2.2"/></svg>
<div class="txt rowt" style="left:506px;top:474.5px;line-height:20px">Draft orders</div>
<div class="txt rowt" style="right:88px;top:474.5px;line-height:20px;letter-spacing:0.3px">0</div>
<svg class="abs" style="left:1082px;top:474.5px" width="20" height="20" viewBox="0 0 20 20" ><path d="M6.6 5L12.4 10.1L6.6 15.2" fill="none" stroke="#4a4a4a" stroke-width="1.8" stroke-linecap="round" stroke-linejoin="round"/></svg>
<div class="hr" style="left:466px;top:512px;width:638px"></div>
<svg class="abs" style="left:468px;top:530.5px" width="20" height="20" viewBox="0 0 20 20" ><rect x="2.85" y="5.4" width="15.1" height="12.1" rx="3" fill="none" stroke="#3d3d3d" stroke-width="1.6" stroke-linecap="round" stroke-linejoin="round"/><path fill="none" stroke="#3d3d3d" stroke-width="1.6" stroke-linecap="round" stroke-linejoin="round" d="M7.4 5.3V3.6Q7.4 2 9 2H12.1Q13.7 2 13.7 3.6V5.3"/><path fill="none" stroke="#3d3d3d" stroke-width="1.6" stroke-linecap="round" stroke-linejoin="round" d="M5.4 9.8Q10.5 12.8 15.6 9.8M10.5 11.6V12.5"/></svg>
<div class="txt rowt" style="left:506px;top:530.5px;line-height:20px">Companies</div>
<div class="txt rowt" style="right:88px;top:530.5px;line-height:20px;letter-spacing:0.3px">0</div>
<svg class="abs" style="left:1082px;top:530.5px" width="20" height="20" viewBox="0 0 20 20" ><path d="M6.6 5L12.4 10.1L6.6 15.2" fill="none" stroke="#4a4a4a" stroke-width="1.8" stroke-linecap="round" stroke-linejoin="round"/></svg>
<div class="hr" style="left:466px;top:568px;width:638px"></div>
<svg class="abs" style="left:468px;top:586.5px" width="20" height="20" viewBox="0 0 20 20" ><path fill="none" stroke="#3d3d3d" stroke-width="1.6" stroke-linecap="round" stroke-linejoin="round" d="M13.6 17.55H5.3Q3.3 17.55 3.3 15.5V4.5Q3.3 2.5 5.3 2.5H11.6Q13.6 2.5 13.6 4.5V17.55H16Q17.6 17.55 17.6 16V9Q17.6 7.3 16 7.3H13.6"/><path fill="#4a4a4a" d="M5.3 5.6h2.1v1.7H5.3ZM8.7 5.6h2.2v1.7H8.7ZM5.3 8.6h2.1v1.7H5.3ZM8.7 8.6h2.2v1.7H8.7Z"/><path fill="none" stroke="#3d3d3d" stroke-width="1.6" stroke-linecap="round" stroke-linejoin="round" d="M6.6 17.4V14.6Q6.6 13.1 8.3 13.1Q10 13.1 10 14.6V17.4"/></svg>
<div class="txt rowt" style="left:506px;top:586.5px;line-height:20px">Company locations</div>
<div class="txt rowt" style="right:88px;top:586.5px;line-height:20px;letter-spacing:0.3px">0</div>
<svg class="abs" style="left:1082px;top:586.5px" width="20" height="20" viewBox="0 0 20 20" ><path d="M6.6 5L12.4 10.1L6.6 15.2" fill="none" stroke="#4a4a4a" stroke-width="1.8" stroke-linecap="round" stroke-linejoin="round"/></svg>
<div class="hr" style="left:466px;top:624px;width:638px"></div>
<svg class="abs" style="left:468px;top:642.5px" width="20" height="20" viewBox="0 0 20 20" ><path fill="none" stroke="#3d3d3d" stroke-width="1.6" stroke-linecap="round" stroke-linejoin="round" d="M10.2 2.2A5.8 5.8 0 0 1 16 8C16 11.6 12.7 14.8 10.2 17C7.7 14.8 4.4 11.6 4.4 8A5.8 5.8 0 0 1 10.2 2.2Z"/><circle cx="10.2" cy="8.1" r="2" fill="none" stroke="#3d3d3d" stroke-width="1.6" stroke-linecap="round" stroke-linejoin="round"/><path fill="none" stroke="#3d3d3d" stroke-width="1.6" stroke-linecap="round" stroke-linejoin="round" d="M4.6 18.2H15.8"/></svg>
<div class="txt rowt" style="left:506px;top:642.5px;line-height:20px">Locations</div>
<div class="txt rowt" style="right:88px;top:642.5px;line-height:20px;letter-spacing:0.3px">0</div>
<svg class="abs" style="left:1082px;top:642.5px" width="20" height="20" viewBox="0 0 20 20" ><path d="M6.6 5L12.4 10.1L6.6 15.2" fill="none" stroke="#4a4a4a" stroke-width="1.8" stroke-linecap="round" stroke-linejoin="round"/></svg>
<div class="hr" style="left:466px;top:680px;width:638px"></div>
<svg class="abs" style="left:468px;top:698.5px" width="20" height="20" viewBox="0 0 20 20" ><path fill="none" stroke="#3d3d3d" stroke-width="1.6" stroke-linecap="round" stroke-linejoin="round" d="M10.6 2.45H6Q3.3 2.45 3.3 5.2V14.8Q3.3 17.55 6 17.55H14.8Q17.55 17.55 17.55 14.8V9.3Z"/><path fill="none" stroke="#3d3d3d" stroke-width="1.6" stroke-linecap="round" stroke-linejoin="round" d="M10.6 2.6V6.8Q10.6 8.6 12.4 8.6H17.4"/></svg>
<div class="txt rowt" style="left:506px;top:698.5px;line-height:20px">Pages</div>
<div class="txt rowt" style="right:88px;top:698.5px;line-height:20px;letter-spacing:0.3px">0</div>
<svg class="abs" style="left:1082px;top:698.5px" width="20" height="20" viewBox="0 0 20 20" ><path d="M6.6 5L12.4 10.1L6.6 15.2" fill="none" stroke="#4a4a4a" stroke-width="1.8" stroke-linecap="round" stroke-linejoin="round"/></svg>
<div class="hr" style="left:466px;top:736px;width:638px"></div>
<svg class="abs" style="left:468px;top:754.5px" width="20" height="20" viewBox="0 0 20 20" ><path fill="none" stroke="#3d3d3d" stroke-width="1.6" stroke-linecap="round" stroke-linejoin="round" d="M10.8 2.1H6Q3.3 2.1 3.3 4.8V15.4Q3.3 18.1 6 18.1H14.8Q17.55 18.1 17.55 15.4V10.6"/><path fill="none" stroke="#3d3d3d" stroke-width="1.6" stroke-linecap="round" stroke-linejoin="round" d="M6.9 10.6H12.6M6.9 14.2H10.6"/><path fill="none" stroke="#4a4a4a" stroke-width="2.2" stroke-linecap="round" d="M12.6 7.4L16.8 3.2"/><path fill="none" stroke="#4a4a4a" stroke-width="1.8" stroke-linecap="round" d="M18.4 1.6L18.6 1.4"/></svg>
<div class="txt rowt" style="left:506px;top:754.5px;line-height:20px">Blogs</div>
<div class="txt rowt" style="right:88px;top:754.5px;line-height:20px;letter-spacing:0.3px">0</div>
<svg class="abs" style="left:1082px;top:754.5px" width="20" height="20" viewBox="0 0 20 20" ><path d="M6.6 5L12.4 10.1L6.6 15.2" fill="none" stroke="#4a4a4a" stroke-width="1.8" stroke-linecap="round" stroke-linejoin="round"/></svg>
<div class="hr" style="left:466px;top:792px;width:638px"></div>
<svg class="abs" style="left:468px;top:810.5px" width="20" height="20" viewBox="0 0 20 20" ><path fill="none" stroke="#3d3d3d" stroke-width="1.6" stroke-linecap="round" stroke-linejoin="round" d="M3.4 17.4L4 14.2L13.6 4.6Q15.2 3 16.8 4.6Q18.4 6.2 16.8 7.8L7.2 17.4Z"/><path fill="none" stroke="#3d3d3d" stroke-width="1.6" stroke-linecap="round" stroke-linejoin="round" d="M12.4 5.9L15.5 9"/></svg>
<div class="txt rowt" style="left:506px;top:810.5px;line-height:20px">Blog posts</div>
<div class="txt rowt" style="right:88px;top:810.5px;line-height:20px;letter-spacing:0.3px">0</div>
<svg class="abs" style="left:1082px;top:810.5px" width="20" height="20" viewBox="0 0 20 20" ><path d="M6.6 5L12.4 10.1L6.6 15.2" fill="none" stroke="#4a4a4a" stroke-width="1.8" stroke-linecap="round" stroke-linejoin="round"/></svg>
<div class="hr" style="left:466px;top:848px;width:638px"></div>
<svg class="abs" style="left:468px;top:866.5px" width="20" height="20" viewBox="0 0 20 20" ><path fill="none" stroke="#3d3d3d" stroke-width="1.6" stroke-linecap="round" stroke-linejoin="round" d="M15.9 4.75A7.5 7.5 0 1 0 12.35 16.95"/><path fill="none" stroke="#3d3d3d" stroke-width="1.6" stroke-linecap="round" stroke-linejoin="round" d="M11.4 2.5C10.6 4.3 9.2 6.5 9.1 7.6C9 8.6 10.4 9.2 12 8.9"/><path fill="none" stroke="#3d3d3d" stroke-width="1.6" stroke-linecap="round" stroke-linejoin="round" d="M3.9 7.6C5.4 8.6 6.4 10.3 7.1 11.8C7.8 13.2 9.4 13.7 10.4 14.8C10.9 15.5 11 16.5 11.1 17.3"/><path fill="none" stroke="#3d3d3d" stroke-width="1.6" stroke-linecap="round" stroke-linejoin="round" d="M19.1 9.5C18.6 8.7 17.9 8.3 17 8.3C15.7 8.3 14.7 9.1 14.7 10.3C14.7 12.6 19.3 11.7 19.3 14.3C19.3 15.5 18.2 16.3 16.9 16.3C15.9 16.3 15 15.8 14.4 15.1M16.9 6.9V8.3M16.6 16.3V17.6"/></svg>
<div class="txt rowt" style="left:506px;top:866.5px;line-height:20px">Markets</div>
<div class="txt rowt" style="right:88px;top:866.5px;line-height:20px;letter-spacing:0.3px">0</div>
<svg class="abs" style="left:1082px;top:866.5px" width="20" height="20" viewBox="0 0 20 20" ><path d="M6.6 5L12.4 10.1L6.6 15.2" fill="none" stroke="#4a4a4a" stroke-width="1.8" stroke-linecap="round" stroke-linejoin="round"/></svg>
<div id="card2"></div>
<div class="txt" style="left:450px;top:968px;font-size:16px;font-weight:bold;letter-spacing:0.35px;color:#303030;line-height:20px">Define your first metaobject</div>
<svg class="abs" style="left:678px;top:967px" width="20" height="20" viewBox="0 0 20 20" ><circle cx="10" cy="10.4" r="7.6" fill="none" stroke="#616161" stroke-width="1.3"/><path d="M10 9.3V14" stroke="#616161" stroke-width="1.5" stroke-linecap="round"/><circle cx="10" cy="6.8" r="0.95" fill="#616161"/></svg>
<svg class="abs" style="left:0;top:0" width="1152" height="984" viewBox="0 0 1152 984">
<line x1="312" y1="815" x2="222" y2="870" stroke="#ee0000" stroke-width="3"/>
<path d="M204 881.7L218.1 863.6L227.7 877.7Z" fill="#ff0000"/>
<line x1="628" y1="313.4" x2="838" y2="313.4" stroke="#ee0000" stroke-width="3"/>
<path d="M606.1 313.4L628.7 305.4L628.7 321.4Z" fill="#ff0000"/>
</svg>
<div class="badge" style="left:313px;top:794.8px"></div>
<div class="badge" style="left:837px;top:299px">2</div>
<div class="badge" style="left:766px;top:187px">3</div>
<svg class="abs" style="left:0;top:0" width="1152" height="984" viewBox="0 0 1152 984"><path fill="#fff" d="M327.4 804H331.3V816H334.1V818.3H324.7V816H327.4V808.4L324.8 809.2V806.6Z"/></svg>
<div class="abs" style="left:0;top:982px;width:1152px;height:1px;background:#f8f8f8"></div>
<div class="abs" style="left:0;top:983px;width:1152px;height:1px;background:#9a9a9a"></div>
<svg class="abs" style="left:0;top:972px" width="12" height="12" viewBox="0 0 12 12"><path d="M0 3.5A8 8 0 0 0 8 11.5V12H0Z" fill="#c4c4c4"/><path d="M0.5 3.6A7.6 7.6 0 0 0 8 11" fill="none" stroke="#fdfdfd" stroke-width="1"/></svg>
</body></html>
